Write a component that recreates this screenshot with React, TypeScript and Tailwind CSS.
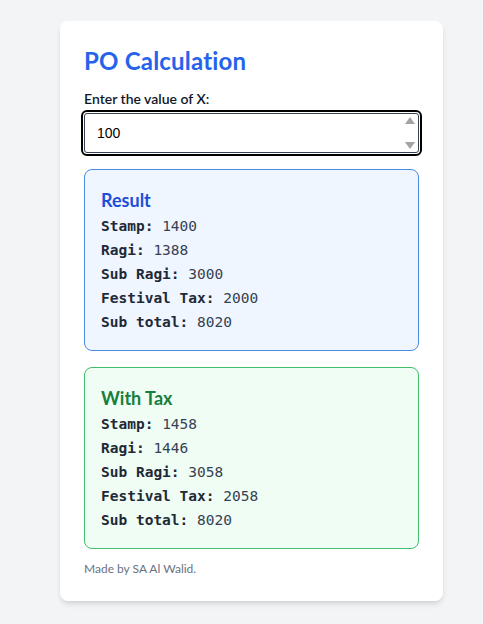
import React, { useState } from 'react';

const Row: React.FC<{ label: string; value: number }> = ({ label, value }) => (
  <p className="leading-6">
    <span className="font-bold text-[#1f2937]">{label}:</span> {value}
  </p>
);

const App: React.FC = () => {
  const [x, setX] = useState('100');

  return (
    <div className="min-h-screen bg-[#f3f4f6] pt-[21px] pl-[60px] font-['Lato','Noto_Sans',sans-serif]">
      <div className="w-[383px] bg-white rounded-lg shadow-md p-6">
        <h1 className="text-2xl font-bold text-[#2563eb] mb-3 tracking-[0.2px]">PO Calculation</h1>
        <label className="block text-sm font-semibold text-gray-900 mb-1">Enter the value of X:</label>
        <div className="relative">
          <input
            type="number"
            value={x}
            onChange={(e) => setX(e.target.value)}
            className="w-full border border-gray-700 rounded-[3px] px-3 py-[9px] text-sm text-black font-['Liberation_Sans',Arial,sans-serif] outline-2 outline-offset-1 outline-black [appearance:textfield] [&::-webkit-inner-spin-button]:appearance-none"
          />
          {/* spinner arrows */}
          <div className="absolute right-[3px] top-[4px] bottom-[4px] flex flex-col justify-between items-center w-[12px] pointer-events-none">
            <span className="w-0 h-0 border-l-[5px] border-r-[5px] border-b-[7px] border-l-transparent border-r-transparent border-b-[#a3a3a3]" />
            <span className="w-0 h-0 border-l-[5px] border-r-[5px] border-t-[7px] border-l-transparent border-r-transparent border-t-[#a3a3a3]" />
          </div>
        </div>

        <div className="mt-4 bg-[#eff6ff] border border-[#4a8be6] rounded-lg p-4">
          <h2 className="text-lg font-bold text-[#1d4ed8] leading-7">Result</h2>
          <div className="font-['DejaVu_Sans_Mono',monospace] text-[14.5px] text-[#374151]">
            <Row label="Stamp" value={1400} />
            <Row label="Ragi" value={1388} />
            <Row label="Sub Ragi" value={3000} />
            <Row label="Festival Tax" value={2000} />
            <Row label="Sub total" value={8020} />
          </div>
        </div>

        <div className="mt-4 bg-[#f0fdf4] border border-[#3fbf6a] rounded-lg p-4">
          <h2 className="text-lg font-bold text-[#15803d] leading-7">With Tax</h2>
          <div className="font-['DejaVu_Sans_Mono',monospace] text-[14.5px] text-[#374151]">
            <Row label="Stamp" value={1458} />
            <Row label="Ragi" value={1446} />
            <Row label="Sub Ragi" value={3058} />
            <Row label="Festival Tax" value={2058} />
            <Row label="Sub total" value={8020} />
          </div>
        </div>

        <p className="mt-3 text-xs text-gray-500">Made by SA Al Walid.</p>
      </div>
    </div>
  );
};

export default App;
